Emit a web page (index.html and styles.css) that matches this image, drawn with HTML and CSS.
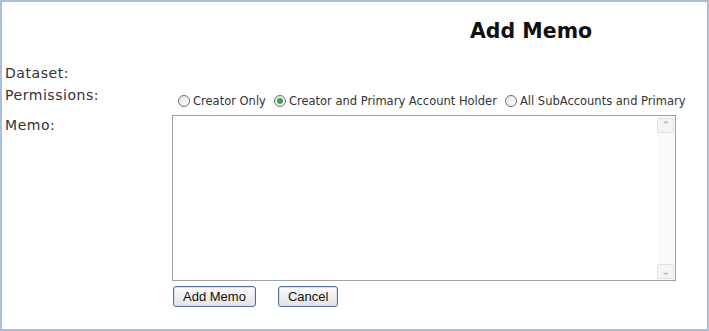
FILE: index.html
```html
<!DOCTYPE html>
<html lang="en">
<head>
    <meta charset="UTF-8">
    <title>Add Memo</title>
    <link rel="stylesheet" href="styles.css">
</head>
<body>
    <div class="frame">
        <h1 class="title">Add Memo</h1>
        <div class="form">
            <div class="label row-dataset">Dataset:</div>
            <div class="value row-dataset"></div>

            <div class="label row-perms">Permissions:</div>
            <div class="value row-perms perms">
                <label><span class="radio"></span>Creator Only</label>
                <label><span class="radio checked"></span>Creator and Primary Account Holder</label>
                <label><span class="radio"></span>All SubAccounts and Primary</label>
            </div>

            <div class="label memo-label">Memo:</div>
            <div class="value">
                <div class="memo-box">
                    <textarea class="memo"></textarea>
                    <div class="scrollbar">
                        <div class="arrow">&#8963;</div>
                        <div class="track"></div>
                        <div class="arrow">&#8964;</div>
                    </div>
                </div>
            </div>

            <div class="label"></div>
            <div class="value buttons">
                <button class="btn">Add Memo</button>
                <button class="btn">Cancel</button>
            </div>
        </div>
    </div>
</body>
</html>
```

FILE: styles.css
```css
body { margin: 0; background: #fff; font-family: "DejaVu Sans", Verdana, sans-serif; color: #222; }
.frame { width: 709px; height: 331px; box-sizing: border-box; border: 2px solid #a9bfdc; padding: 0 3px; }
.title { margin: 0; box-sizing: border-box; height: 61px; padding: 17px 0 0 465px; font-size: 20.5px; font-weight: bold; color: #111; }
.form { display: grid; grid-template-columns: 167px 1fr; }
.label { font-size: 14px; letter-spacing: 0.55px; line-height: 20px; color: #333; }
.row-dataset { height: 22px; }
.row-perms { height: 23px; }
.perms { display: flex; align-items: center; box-sizing: border-box; padding: 8px 0 0 6px; height: 23px; font-size: 11.5px; line-height: 14px; color: #333; }
.perms label { display: flex; align-items: center; margin-right: 8px; }
.radio { width: 12px; height: 12px; border: 1px solid #707070; border-radius: 50%; margin-right: 3px; box-sizing: border-box; background: linear-gradient(135deg, #e6e6e6, #fdfdfd); position: relative; }
.radio.checked::after { content: ""; position: absolute; left: 2px; top: 2px; width: 6px; height: 6px; border-radius: 50%; background: #3aa64a; }
.memo-label { padding-top: 7px; }
.memo-box { display: flex; width: 504px; height: 166px; box-sizing: border-box; border: 1px solid #9aa3ad; margin-top: 7px; background: #fff; }
.memo { flex: 1; border: none; resize: none; outline: none; font-family: inherit; }
.scrollbar { width: 17px; display: flex; flex-direction: column; padding: 2px 1px 1px 0; background: #fafaf8; }
.arrow { height: 15px; box-sizing: border-box; border: 1px solid #e2e2e2; border-radius: 2px; font-size: 11px; line-height: 13px; text-align: center; color: #b0b0b0; background: #f4f4f2; }
.track { flex: 1; }
.buttons { display: flex; gap: 22px; padding-top: 5px; }
.btn { font-family: "Liberation Sans", Arial, sans-serif; font-size: 13px; color: #111; height: 21px; padding: 0 9px; border: 1px solid #4f6f9a; border-radius: 3px; background: linear-gradient(#fbfbfb, #e3e3e3); box-shadow: inset 0 0 0 1px #d6e2f0; }
.btn:first-child { margin-left: 1px; }
```
